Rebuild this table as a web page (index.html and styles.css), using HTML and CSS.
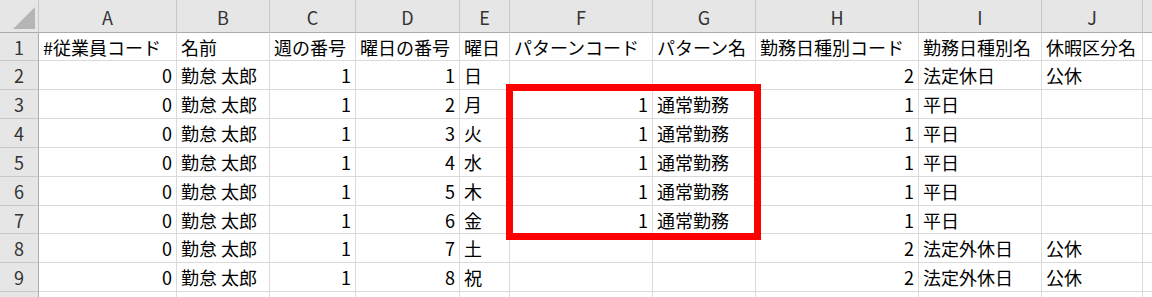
FILE: index.html
```html
<!DOCTYPE html>
<html lang="ja">
<head>
<meta charset="utf-8">
<link rel="stylesheet" href="styles.css">
</head>
<body>
<div class="sheet">
  <div class="grid">
    <div class="hd corner"><span class="tri"></span></div>
    <div class="hd">A</div><div class="hd">B</div><div class="hd">C</div><div class="hd">D</div><div class="hd">E</div><div class="hd">F</div><div class="hd">G</div><div class="hd">H</div><div class="hd">I</div><div class="hd">J</div><div class="hd last"></div>

    <div class="rh">1</div>
    <div class="c">#従業員コード</div><div class="c">名前</div><div class="c">週の番号</div><div class="c">曜日の番号</div><div class="c">曜日</div><div class="c">パターンコード</div><div class="c">パターン名</div><div class="c">勤務日種別コード</div><div class="c">勤務日種別名</div><div class="c">休暇区分名</div><div class="c last"></div>

    <div class="rh">2</div>
    <div class="c n">0</div><div class="c">勤怠 太郎</div><div class="c n">1</div><div class="c n">1</div><div class="c">日</div><div class="c"></div><div class="c"></div><div class="c n">2</div><div class="c">法定休日</div><div class="c">公休</div><div class="c last"></div>

    <div class="rh">3</div>
    <div class="c n">0</div><div class="c">勤怠 太郎</div><div class="c n">1</div><div class="c n">2</div><div class="c">月</div><div class="c n">1</div><div class="c">通常勤務</div><div class="c n">1</div><div class="c">平日</div><div class="c"></div><div class="c last"></div>

    <div class="rh">4</div>
    <div class="c n">0</div><div class="c">勤怠 太郎</div><div class="c n">1</div><div class="c n">3</div><div class="c">火</div><div class="c n">1</div><div class="c">通常勤務</div><div class="c n">1</div><div class="c">平日</div><div class="c"></div><div class="c last"></div>

    <div class="rh">5</div>
    <div class="c n">0</div><div class="c">勤怠 太郎</div><div class="c n">1</div><div class="c n">4</div><div class="c">水</div><div class="c n">1</div><div class="c">通常勤務</div><div class="c n">1</div><div class="c">平日</div><div class="c"></div><div class="c last"></div>

    <div class="rh">6</div>
    <div class="c n">0</div><div class="c">勤怠 太郎</div><div class="c n">1</div><div class="c n">5</div><div class="c">木</div><div class="c n">1</div><div class="c">通常勤務</div><div class="c n">1</div><div class="c">平日</div><div class="c"></div><div class="c last"></div>

    <div class="rh">7</div>
    <div class="c n">0</div><div class="c">勤怠 太郎</div><div class="c n">1</div><div class="c n">6</div><div class="c">金</div><div class="c n">1</div><div class="c">通常勤務</div><div class="c n">1</div><div class="c">平日</div><div class="c"></div><div class="c last"></div>

    <div class="rh">8</div>
    <div class="c n">0</div><div class="c">勤怠 太郎</div><div class="c n">1</div><div class="c n">7</div><div class="c">土</div><div class="c"></div><div class="c"></div><div class="c n">2</div><div class="c">法定外休日</div><div class="c">公休</div><div class="c last"></div>

    <div class="rh">9</div>
    <div class="c n">0</div><div class="c">勤怠 太郎</div><div class="c n">1</div><div class="c n">8</div><div class="c">祝</div><div class="c"></div><div class="c"></div><div class="c n">2</div><div class="c">法定外休日</div><div class="c">公休</div><div class="c last"></div>

    <div class="rh"></div>
    <div class="c"></div><div class="c"></div><div class="c"></div><div class="c"></div><div class="c"></div><div class="c"></div><div class="c"></div><div class="c"></div><div class="c"></div><div class="c"></div><div class="c last"></div>
  </div>
  <div class="highlight"></div>
</div>
</body>
</html>
```

FILE: styles.css
```css
html, body {
  margin: 0;
  padding: 0;
  background: #ffffff;
}
body {
  font-family: "Noto Sans CJK JP", "Noto Sans", sans-serif;
  font-size: 18px;
  color: #000;
  overflow: hidden;
  width: 1152px;
  height: 297px;
}
.sheet {
  position: relative;
  width: 1152px;
  height: 297px;
  overflow: hidden;
}
.grid {
  display: grid;
  grid-template-columns: 39px 138px 93px 86px 104px 50px 143px 103px 163px 123px 101px 9px;
  grid-template-rows: 33px 28px 29px 29px 29px 29px 29px 28px 29px 29px 30px;
}
.grid > div {
  box-sizing: border-box;
  border-right: 1px solid #dadada;
  border-bottom: 1px solid #dadada;
  white-space: nowrap;
  overflow: hidden;
  display: flex;
  align-items: center;
  line-height: 1;
}
.hd {
  background: #e6e6e6;
  justify-content: center;
  color: #333;
  border-right-color: #c8c8c8 !important;
  border-bottom-color: #ababab !important;
  padding-top: 2px;
}
.corner {
  position: relative;
  justify-content: flex-end !important;
  align-items: flex-end !important;
  padding: 0 3px 3px 0 !important;
}
.tri {
  width: 0;
  height: 0;
  border-left: 22px solid transparent;
  border-bottom: 22px solid #b5b5b5;
}
.rh {
  background: #e6e6e6;
  justify-content: center;
  color: #333;
  border-right-color: #ababab !important;
  border-bottom-color: #c8c8c8 !important;
}
.c {
  padding: 0 4px;
  justify-content: flex-start;
}
.c.n {
  justify-content: flex-end;
}
.grid > .last {
  border-right: none;
}
.highlight {
  position: absolute;
  left: 506px;
  top: 84px;
  width: 255px;
  height: 156px;
  box-sizing: border-box;
  border: 7px solid #ff0000;
  pointer-events: none;
}
```
